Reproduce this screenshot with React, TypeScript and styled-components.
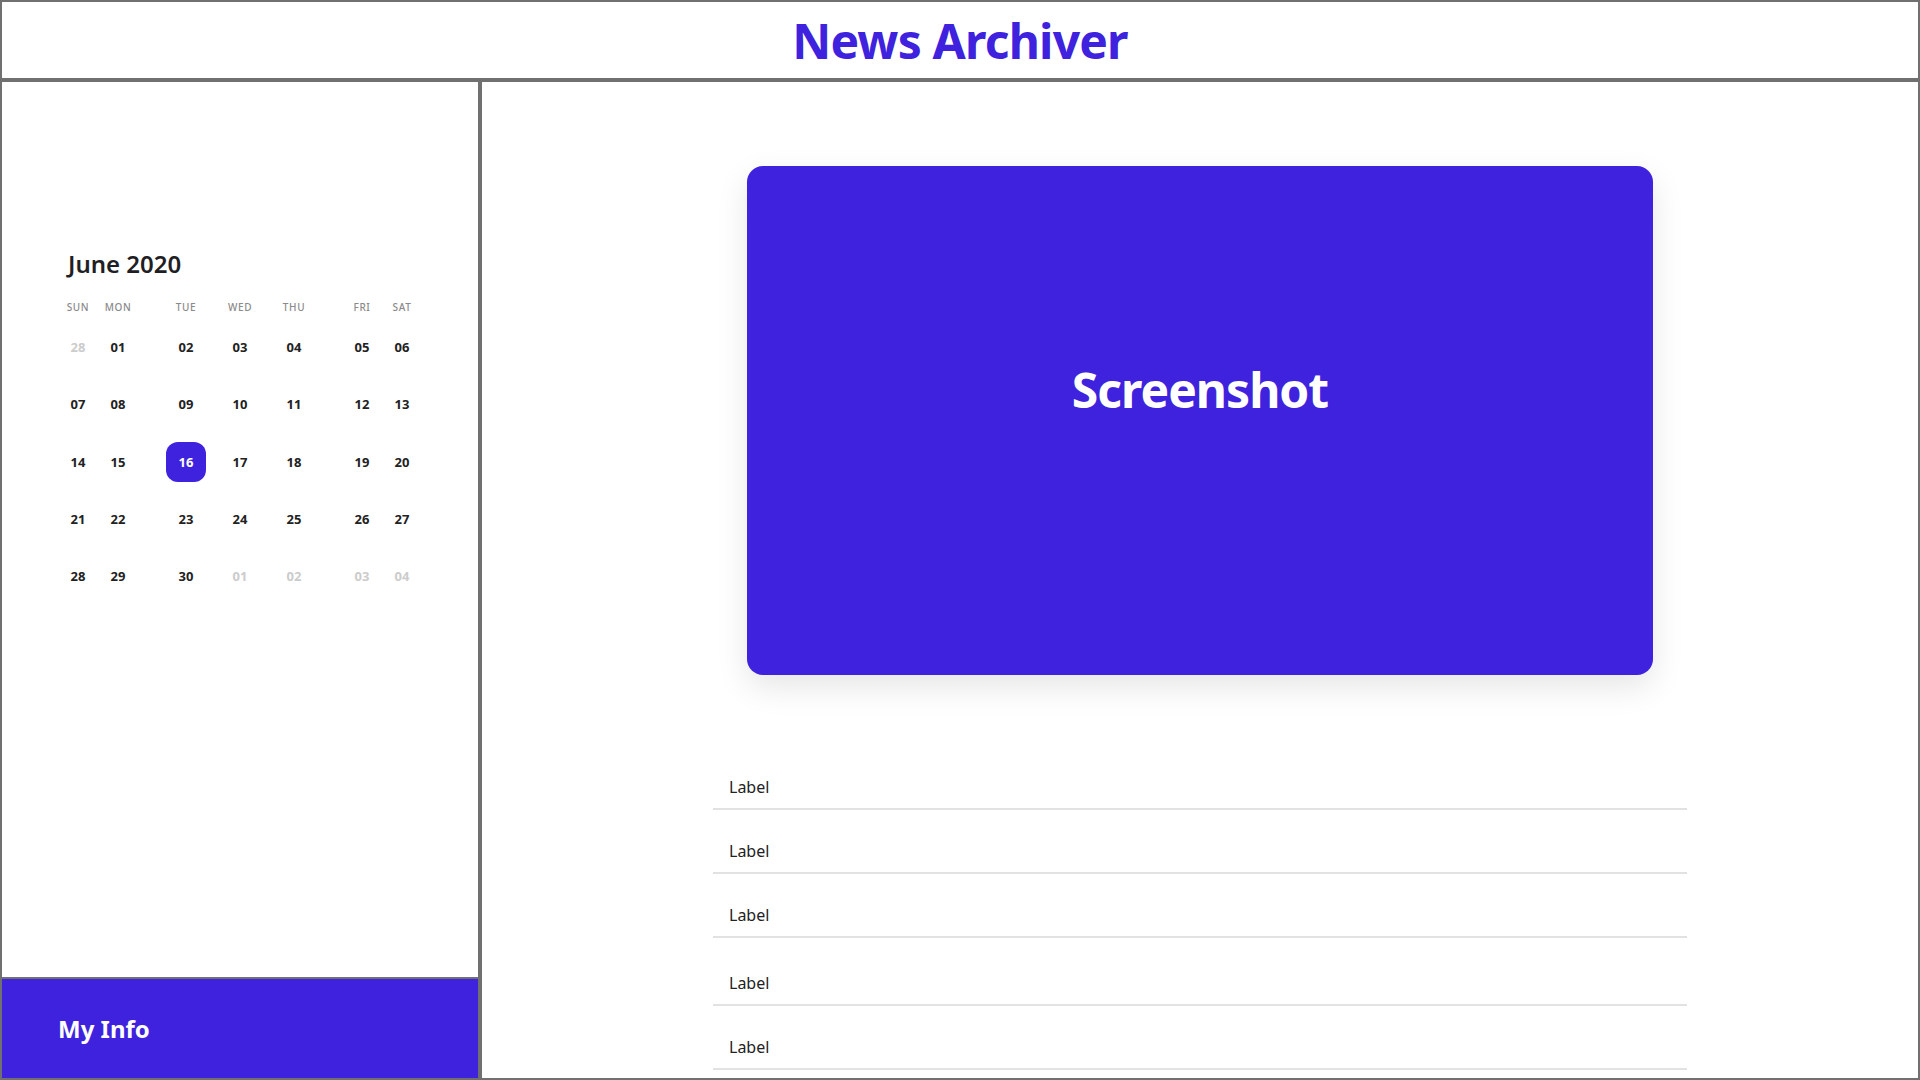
import React from "react";
import styled, { createGlobalStyle } from "styled-components";

const BLUE = "#3e22de";
const FRAME = "#707070";

const GlobalStyle = createGlobalStyle`
  html, body {
    margin: 0;
    padding: 0;
    background: #ffffff;
    font-family: "Noto Sans", "Open Sans", sans-serif;
    color: #222222;
  }
  * { box-sizing: border-box; }
`;

const Page = styled.div`
  width: 1920px;
  height: 1080px;
  display: flex;
  flex-direction: column;
  overflow: hidden;
`;

const Header = styled.header`
  height: 80px;
  flex: none;
  border: 2px solid ${FRAME};
  display: flex;
  align-items: center;
  justify-content: center;
`;

const Title = styled.h1`
  margin: 0;
  font-size: 48px;
  font-weight: 700;
  line-height: 1;
  color: ${BLUE};
  letter-spacing: -0.8px;
  padding-top: 2px;
`;

const Body = styled.div`
  flex: 1;
  display: flex;
  min-height: 0;
`;

const Sidebar = styled.aside`
  width: 480px;
  flex: none;
  border: 2px solid ${FRAME};
  display: flex;
  flex-direction: column;
`;

const CalendarArea = styled.div`
  flex: 1;
  padding: 166px 0 0 56px;
`;

const MonthTitle = styled.h2`
  margin: 0 0 17px 10px;
  font-size: 24px;
  line-height: 32px;
  font-weight: 600;
  color: #1e1e24;
`;

const Grid = styled.div`
  display: grid;
  grid-template-columns: 40px 68px 54px 54px 68px 40px 40px;
  row-gap: 17.2px;
  justify-items: start;
`;

const WeekdayRow = styled.div`
  display: contents;
`;

const Weekday = styled.div`
  width: 40px;
  height: 20px;
  margin-bottom: -7px;
  display: flex;
  align-items: center;
  justify-content: center;
  font-size: 10px;
  font-weight: 500;
  letter-spacing: 0.6px;
  color: #8a8a8a;
`;

const Day = styled.div<{ $muted?: boolean; $active?: boolean }>`
  width: 40px;
  height: 40px;
  border-radius: 12px;
  display: flex;
  align-items: center;
  justify-content: center;
  font-size: 13px;
  font-weight: 700;
  color: ${(p) => (p.$active ? "#ffffff" : p.$muted ? "#cccccc" : "#222222")};
  background: ${(p) => (p.$active ? BLUE : "transparent")};
`;

const MyInfo = styled.div`
  height: 101px;
  flex: none;
  border-top: 2px solid ${FRAME};
  background: ${BLUE};
  display: flex;
  align-items: center;
  padding-left: 56px;
  color: #ffffff;
  font-size: 24px;
  font-weight: 700;
`;

const Main = styled.main`
  flex: 1;
  border: 2px solid ${FRAME};
  display: flex;
  flex-direction: column;
  align-items: center;
  padding-top: 84px;
  overflow: hidden;
`;

const ShotCard = styled.div`
  width: 906px;
  height: 509px;
  flex: none;
  background: ${BLUE};
  border-radius: 16px;
  box-shadow: 0 12px 32px rgba(0, 0, 0, 0.1);
  display: flex;
  align-items: center;
  justify-content: center;
  padding-bottom: 62px;
  color: #ffffff;
  font-size: 48px;
  font-weight: 700;
  letter-spacing: -1px;
`;

const List = styled.ul`
  list-style: none;
  margin: 71px 0 0;
  padding: 0;
  width: 974px;
  flex: none;
`;

const Row = styled.li<{ $tall?: boolean }>`
  padding: ${(p) => (p.$tall ? "34px" : "30px")} 16px 10px;
  border-bottom: 2px solid #e2e2e2;
  font-size: 16px;
  line-height: 22px;
  color: #222222;
`;

type Cell = { d: string; muted?: boolean; active?: boolean };

const weekdays = ["SUN", "MON", "TUE", "WED", "THU", "FRI", "SAT"];

const weeks: Cell[][] = [
  [{ d: "28", muted: true }, { d: "01" }, { d: "02" }, { d: "03" }, { d: "04" }, { d: "05" }, { d: "06" }],
  [{ d: "07" }, { d: "08" }, { d: "09" }, { d: "10" }, { d: "11" }, { d: "12" }, { d: "13" }],
  [{ d: "14" }, { d: "15" }, { d: "16", active: true }, { d: "17" }, { d: "18" }, { d: "19" }, { d: "20" }],
  [{ d: "21" }, { d: "22" }, { d: "23" }, { d: "24" }, { d: "25" }, { d: "26" }, { d: "27" }],
  [
    { d: "28" },
    { d: "29" },
    { d: "30" },
    { d: "01", muted: true },
    { d: "02", muted: true },
    { d: "03", muted: true },
    { d: "04", muted: true },
  ],
];

const rows = [
  { id: 1, tall: false },
  { id: 2, tall: false },
  { id: 3, tall: false },
  { id: 4, tall: true },
  { id: 5, tall: false },
];

export default function App() {
  return (
    <>
      <GlobalStyle />
      <Page>
        <Header>
          <Title>News Archiver</Title>
        </Header>
        <Body>
          <Sidebar>
            <CalendarArea>
              <MonthTitle>June 2020</MonthTitle>
              <Grid>
                <WeekdayRow>
                  {weekdays.map((w) => (
                    <Weekday key={w}>{w}</Weekday>
                  ))}
                </WeekdayRow>
                {weeks.map((week, i) =>
                  week.map((c, j) => (
                    <Day key={`${i}-${j}`} $muted={c.muted} $active={c.active}>
                      {c.d}
                    </Day>
                  ))
                )}
              </Grid>
            </CalendarArea>
            <MyInfo>My Info</MyInfo>
          </Sidebar>
          <Main>
            <ShotCard>Screenshot</ShotCard>
            <List>
              {rows.map((r) => (
                <Row key={r.id} $tall={r.tall}>
                  Label
                </Row>
              ))}
            </List>
          </Main>
        </Body>
      </Page>
    </>
  );
}
